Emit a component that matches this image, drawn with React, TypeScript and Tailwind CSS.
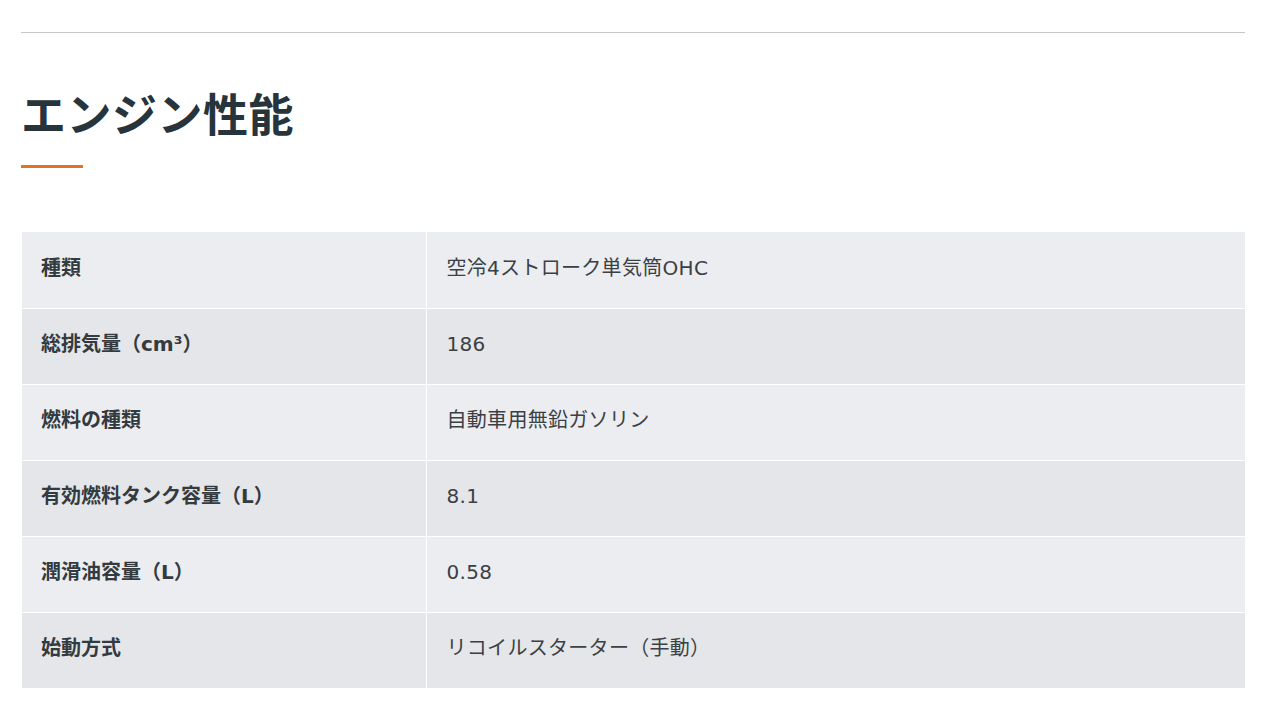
import React from "react";

const rows: [React.ReactNode, string][] = [
  ["種類", "空冷4ストローク単気筒OHC"],
  [<>総排気量（cm³）</>, "186"],
  ["燃料の種類", "自動車用無鉛ガソリン"],
  ["有効燃料タンク容量（L）", "8.1"],
  ["潤滑油容量（L）", "0.58"],
  ["始動方式", "リコイルスターター（手動）"],
];

export default function App() {
  return (
    <div
      className="min-h-[705px] bg-white px-[21px] pt-[32px]"
      style={{ fontFamily: '"DejaVu Sans", "Noto Sans CJK JP", sans-serif' }}
    >
      <div className="h-px w-[1224px] bg-[#c6c6c6]" />
      <h1
        className="mt-[50px] text-[45px] font-bold leading-[60px] tracking-[0.5px] text-[#27343b]"
        style={{ fontFamily: '"Noto Sans CJK JP", sans-serif' }}
      >
        エンジン性能
      </h1>
      <div className="mt-[22px] h-[3px] w-[62px] bg-[#e07424]" />
      <table className="mt-[64px] ml-px w-[1223px] border-collapse">
        <tbody>
          {rows.map(([k, v], i) => (
            <tr
              key={i}
              className={`${i % 2 === 0 ? "bg-[#ebedf0]" : "bg-[#e4e6e9]"} border-t border-white first:border-t-0`}
            >
              <th className="h-[76px] w-[404px] border-r border-white pb-[4px] pl-[19px] text-left align-middle text-[20px] font-bold text-[#333a40]">
                {k}
              </th>
              <td className="h-[76px] pb-[4px] pl-[20px] align-middle text-[20px] tracking-[0.3px] text-[#3b4045]">{v}</td>
            </tr>
          ))}
        </tbody>
      </table>
    </div>
  );
}
